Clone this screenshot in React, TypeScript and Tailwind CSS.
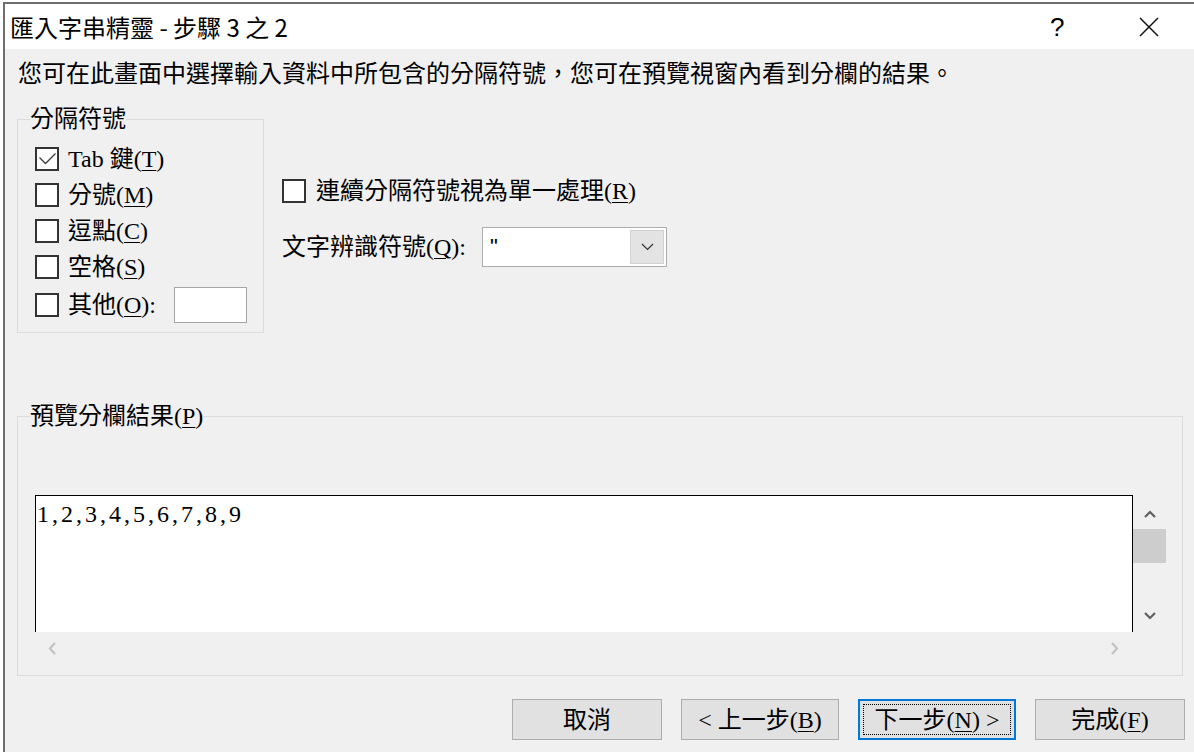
import React from 'react';

const serif = "font-['Liberation_Serif','Noto_Sans_CJK_TC',serif]";

function Box({ checked = false }: { checked?: boolean }) {
  return (
    <span className="w-[24px] h-[24px] shrink-0 border-2 border-[#333333] bg-white flex items-center justify-center">
      {checked && (
        <svg width="20" height="20" viewBox="0 0 20 20">
          <path d="M2.5 8.5 L8.5 14.5 L18.5 4.5" fill="none" stroke="#3a3a3a" strokeWidth="1.3" />
        </svg>
      )}
    </span>
  );
}

function Key({ k }: { k: string }) {
  return <span className="underline underline-offset-[3px] decoration-[1px]">{k}</span>;
}

function Chevron({ dir, color }: { dir: 'up' | 'down' | 'left' | 'right'; color: string }) {
  const pts = {
    up: '1,7 6,2 11,7',
    down: '1,2 6,7 11,2',
    left: '7,1 2,6.5 7,12',
    right: '2,1 7,6.5 2,12',
  }[dir];
  const vertical = dir === 'up' || dir === 'down';
  return (
    <svg width={vertical ? 12 : 9} height={vertical ? 9 : 13} viewBox={vertical ? '0 0 12 9' : '0 0 9 13'}>
      <polyline points={pts} fill="none" stroke={color} strokeWidth="2.2" />
    </svg>
  );
}

function CheckRow({ checked, label, k, tail, last }: { checked?: boolean; label: string; k: string; tail?: string; last?: boolean }) {
  return (
    <div className={`flex items-center ${last ? 'h-[39px]' : 'h-[36px]'}`}>
      <Box checked={checked} />
      <span className="ml-[9px] leading-[32px]">
        {label}(<Key k={k} />){tail}
      </span>
      {last && <span className="ml-[18px] w-[73px] h-[36px] bg-white border border-[#a5a5a5]" />}
    </div>
  );
}

function Button({ children, w, focused }: { children: React.ReactNode; w: string; focused?: boolean }) {
  if (focused) {
    return (
      <div className={`${w} h-[41px] border-2 border-[#0078d7] bg-[#e1e1e1] p-[3px]`}>
        <div className="h-full border border-dotted border-black flex items-center justify-center leading-[32px]">
          {children}
        </div>
      </div>
    );
  }
  return (
    <div className={`${w} h-[41px] border border-[#adadad] bg-[#e1e1e1] flex items-center justify-center leading-[32px]`}>
      {children}
    </div>
  );
}

export default function App() {
  const preview = '1,2,3,4,5,6,7,8,9'.split('');

  return (
    <div className="w-[1194px] h-[752px] bg-white overflow-hidden">
      <div className="ml-[3px] mt-[2px] h-[750px] border-l-2 border-t-2 border-[#6e6e6e] flex flex-col">
        {/* title bar */}
        <div className="h-[45px] shrink-0 bg-white flex items-center text-black">
          <span className="pl-[5px] text-[24px] leading-[30px] font-['Noto_Sans_CJK_TC',sans-serif]">
            匯入字串精靈 - 步驟 3 之 2
          </span>
          <span className="ml-auto w-[16px] text-[26px] leading-[30px] font-['Liberation_Sans',sans-serif]">?</span>
          <svg className="ml-[73px] mr-[35px]" width="20" height="20" viewBox="0 0 20 20">
            <path d="M1 1 L19 19 M19 1 L1 19" stroke="#111" strokeWidth="1.5" />
          </svg>
        </div>

        {/* body */}
        <div className={`flex-1 bg-[#f0f0f0] text-black text-[24px] ${serif}`}>
          <p className="mt-[9px] ml-[13px] leading-[32px] whitespace-nowrap">
            您可在此畫面中選擇輸入資料中所包含的分隔符號，您可在預覽視窗內看到分欄的結果。
          </p>

          <div className="flex mt-[29px] ml-[12px]">
            {/* delimiters group */}
            <div className="relative w-[247px] h-[214px] border border-[#dcdcdc] pt-[21px] pl-[17px]">
              <span className="absolute left-[12px] top-[-17px] bg-[#f0f0f0] leading-[32px]">分隔符號</span>
              <div className="flex items-center h-[36px]">
                <Box checked />
                <span className="ml-[9px] leading-[32px]">
                  Tab 鍵(<Key k="T" />)
                </span>
              </div>
              <CheckRow label="分號" k="M" />
              <CheckRow label="逗點" k="C" />
              <CheckRow label="空格" k="S" />
              <CheckRow label="其他" k="O" tail=":" last />
            </div>

            {/* options */}
            <div className="ml-[18px] pt-[54px]">
              <div className="flex items-center h-[36px]">
                <Box />
                <span className="ml-[10px] leading-[32px]">
                  連續分隔符號視為單一處理(<Key k="R" />)
                </span>
              </div>
              <div className="flex items-center mt-[18px]">
                <span className="w-[200px] leading-[32px]">
                  文字辨識符號(<Key k="Q" />):
                </span>
                <div className="w-[185px] h-[40px] bg-white border border-[#adadad] flex items-center p-[2px]">
                  <span className="flex-1 pl-[5px] leading-[32px] font-['Liberation_Sans',sans-serif] text-[22px]">"</span>
                  <span className="w-[34px] h-[34px] bg-[#e3e3e3] border border-[#d2d2d2] flex items-center justify-center">
                    <svg width="13" height="8" viewBox="0 0 13 8">
                      <polyline points="1,1 6.5,6.5 12,1" fill="none" stroke="#333" strokeWidth="1.2" />
                    </svg>
                  </span>
                </div>
              </div>
            </div>
          </div>

          {/* preview group */}
          <div className="relative mt-[83px] ml-[12px] w-[1166px] h-[260px] border border-[#dcdcdc] pt-[78px] pl-[17px]">
            <span className="absolute left-[12px] top-[-17px] bg-[#f0f0f0] leading-[32px]">
              預覽分欄結果(<Key k="P" />)
            </span>
            <div className="flex">
              <div className="w-[1098px] h-[137px] bg-white border-t border-l border-r border-black pt-[2px] pl-[1px]">
                <div className="flex leading-[32px] font-['Liberation_Serif',serif]">
                  {preview.map((c, i) => (
                    <span key={i} className="inline-block w-[12px] text-center">
                      {c}
                    </span>
                  ))}
                </div>
              </div>
              <div className="w-[33px] h-[137px] flex flex-col">
                <div className="h-[34px] flex items-center justify-center pt-[4px]">
                  <Chevron dir="up" color="#606060" />
                </div>
                <div className="h-[34px] bg-[#cdcdcd]" />
                <div className="flex-1" />
                <div className="h-[34px] flex items-center justify-center">
                  <Chevron dir="down" color="#606060" />
                </div>
              </div>
            </div>
            <div className="w-[1098px] h-[33px] flex items-center justify-between pl-[13px] pr-[14px]">
              <Chevron dir="left" color="#c2c2c2" />
              <Chevron dir="right" color="#c2c2c2" />
            </div>
          </div>

          {/* buttons */}
          <div className="mt-[23px] flex justify-end gap-[19px] pr-[9px]">
            <Button w="w-[150px]">取消</Button>
            <Button w="w-[158px]">
              &lt; 上一步(<Key k="B" />)
            </Button>
            <Button w="w-[158px]" focused>
              下一步(<Key k="N" />) &gt;
            </Button>
            <Button w="w-[150px]">
              完成(<Key k="F" />)
            </Button>
          </div>
        </div>
      </div>
    </div>
  );
}
